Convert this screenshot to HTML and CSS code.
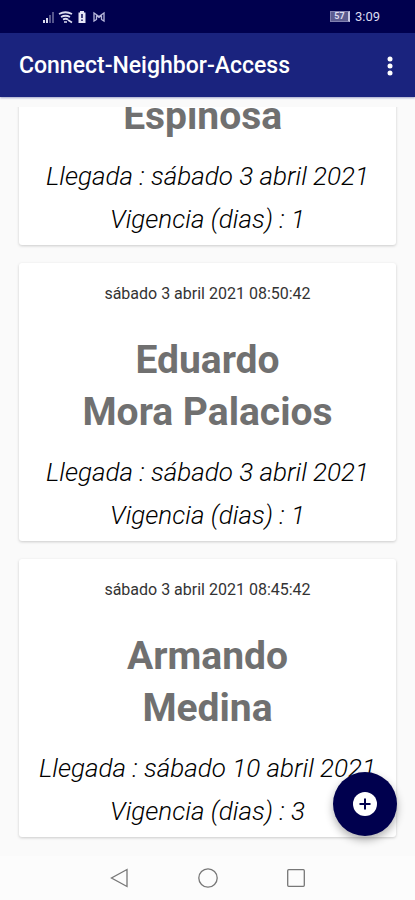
FILE: index.html
```html
<!DOCTYPE html>
<html lang="es">
<head>
<meta charset="utf-8">
<meta name="viewport" content="width=device-width, initial-scale=1">
<title>Connect-Neighbor-Access</title>
<link rel="stylesheet" href="styles.css">
</head>
<body>
<div class="status">
  <svg class="status-icons" width="64" height="16" viewBox="0 0 64 16" aria-hidden="true">
    <path d="M1 14V11H3V14ZM4 14V9H6V14Z" fill="#dcdcf0"/>
    <path d="M7 14V6H9V14ZM10 14V3H12V14Z" fill="#55558c"/>
    <g fill="none" stroke="#dcdcf0" stroke-width="1.800">
      <path d="M17 5Q23.500 1.500 30 5M19 8Q23.500 5.500 28 8M21 10.500Q23.500 9 26 10.500"/>
      <path d="M22 13H25M26 11L30 13.500" stroke-width="1.600"/>
    </g>
    <path d="M38 2H42V3.500H43.500V14H36.500V3.500H38Z" fill="#e6e6f5"/>
    <path d="M40 5V9M40 10.500V12" stroke="#00004e" stroke-width="1.400"/>
    <path d="M52 4V12L54.500 10.500V6.500L57 8.500L59.500 6.500V10.500L62 12V4L57 7.500Z" fill="none" stroke="#b8b8dc" stroke-width="1.300"/>
  </svg>
  <div class="status-right">
    <span class="battery">57</span>
    <span>3:09</span>
  </div>
</div>
<header class="appbar">
  <h1 class="title">Connect-Neighbor-Access</h1>
  <button class="more" type="button" aria-label="Más opciones">
    <svg width="8" height="20" viewBox="0 0 8 20" fill="#fff"><circle cx="4" cy="3" r="2.500"/><circle cx="4" cy="10" r="2.500"/><circle cx="4" cy="17" r="2.500"/></svg>
  </button>
</header>
<main class="list">
  <article class="card">
    <h2 class="name">Espinosa&nbsp;</h2>
    <p class="detail">Llegada : sábado 3 abril 2021</p>
    <p class="detail">Vigencia (dias) : 1</p>
  </article>
  <article class="card">
    <p class="date">sábado 3 abril 2021 08:50:42</p>
    <h2 class="name">Eduardo<br>Mora Palacios</h2>
    <p class="detail">Llegada : sábado 3 abril 2021</p>
    <p class="detail">Vigencia (dias) : 1</p>
  </article>
  <article class="card">
    <p class="date">sábado 3 abril 2021 08:45:42</p>
    <h2 class="name">Armando<br>Medina</h2>
    <p class="detail">Llegada : sábado 10 abril 2021</p>
    <p class="detail">Vigencia (dias) : 3</p>
  </article>
</main>
<button class="fab" type="button" aria-label="Agregar">
  <svg width="24" height="24" viewBox="0 0 24 24"><circle cx="12" cy="12" r="12" fill="#fff"/><path d="M12 6.500V17.500M6.500 12H17.500" stroke="#00004e" stroke-width="2"/></svg>
</button>
<nav class="navbar">
  <button class="nav-btn" type="button" aria-label="Atrás">
    <svg viewBox="0 0 20 20"><path d="M17 1.500V18.500L1.500 10Z"/></svg>
  </button>
  <button class="nav-btn" type="button" aria-label="Inicio">
    <svg viewBox="0 0 20 20"><circle cx="10" cy="10" r="9.200"/></svg>
  </button>
  <button class="nav-btn" type="button" aria-label="Recientes">
    <svg viewBox="0 0 20 20"><rect x="1.700" y="1.700" width="16.600" height="16.600" rx="1"/></svg>
  </button>
</nav>
</body>
</html>
```
FILE: styles.css
```css
* {
  box-sizing: border-box;
  margin: 0;
}

body {
  position: relative;
  display: flex;
  flex-direction: column;
  height: 100vh;
  overflow: hidden;
  background: #fafafa;
  color: #000;
  font-family: Roboto, sans-serif;
}

button {
  display: flex;
  align-items: center;
  justify-content: center;
  padding: 0;
  border: 0;
  background: none;
}

.status {
  display: flex;
  flex: none;
  align-items: center;
  justify-content: space-between;
  height: 33px;
  padding: 0 35px 0 42px;
  background: #00004e;
}

.status-right {
  display: flex;
  align-items: center;
  gap: 5px;
  color: #dcdcf0;
  font-size: 13px;
}

.battery {
  width: 20px;
  border: 1px solid #8080b0;
  border-right: 2px solid #c8c8e4;
  background: #5c5c90;
  font-size: 9px;
  font-weight: 700;
  line-height: 9px;
  text-align: center;
}

.appbar {
  display: flex;
  flex: none;
  align-items: center;
  justify-content: space-between;
  height: 64px;
  padding: 2px 13px 0 19px;
  background: #1a237e;
  box-shadow: 0 1px 2px #1a237e66;
}

.title {
  color: #fff;
  font-size: 23px;
  font-weight: 500;
  line-height: 32px;
}

.more {
  width: 24px;
  height: 32px;
}

.list {
  display: flex;
  flex: 1;
  flex-direction: column;
  justify-content: flex-end;
  gap: 18px;
  min-height: 0;
  margin-top: 10px;
  padding: 0 19px 19px;
  overflow: hidden;
}

.card {
  flex: none;
  padding: 21px 0 4px;
  border-radius: 3px;
  background: #fff;
  box-shadow: 0 1px 3px #00000030;
  text-align: center;
}

.date {
  margin-bottom: 30px;
  color: #333;
  font-size: 16px;
  line-height: 20px;
}

.name {
  margin-bottom: 13px;
  color: #707070;
  font-size: 39px;
  font-weight: 700;
  line-height: 52px;
}

.detail {
  font-size: 26px;
  font-style: italic;
  font-weight: 300;
  line-height: 43px;
}

.fab {
  position: absolute;
  right: 18px;
  bottom: 64px;
  width: 64px;
  height: 64px;
  border-radius: 50%;
  background: #00004e;
  box-shadow: 0 4px 8px #00000050;
}

.navbar {
  display: flex;
  flex: none;
  align-items: center;
  justify-content: center;
  gap: 68px;
  height: 44px;
  background: #fcfcfc;
}

.nav-btn svg {
  width: 20px;
  height: 20px;
  fill: none;
  stroke: #777;
  stroke-width: 1.3;
}
```
